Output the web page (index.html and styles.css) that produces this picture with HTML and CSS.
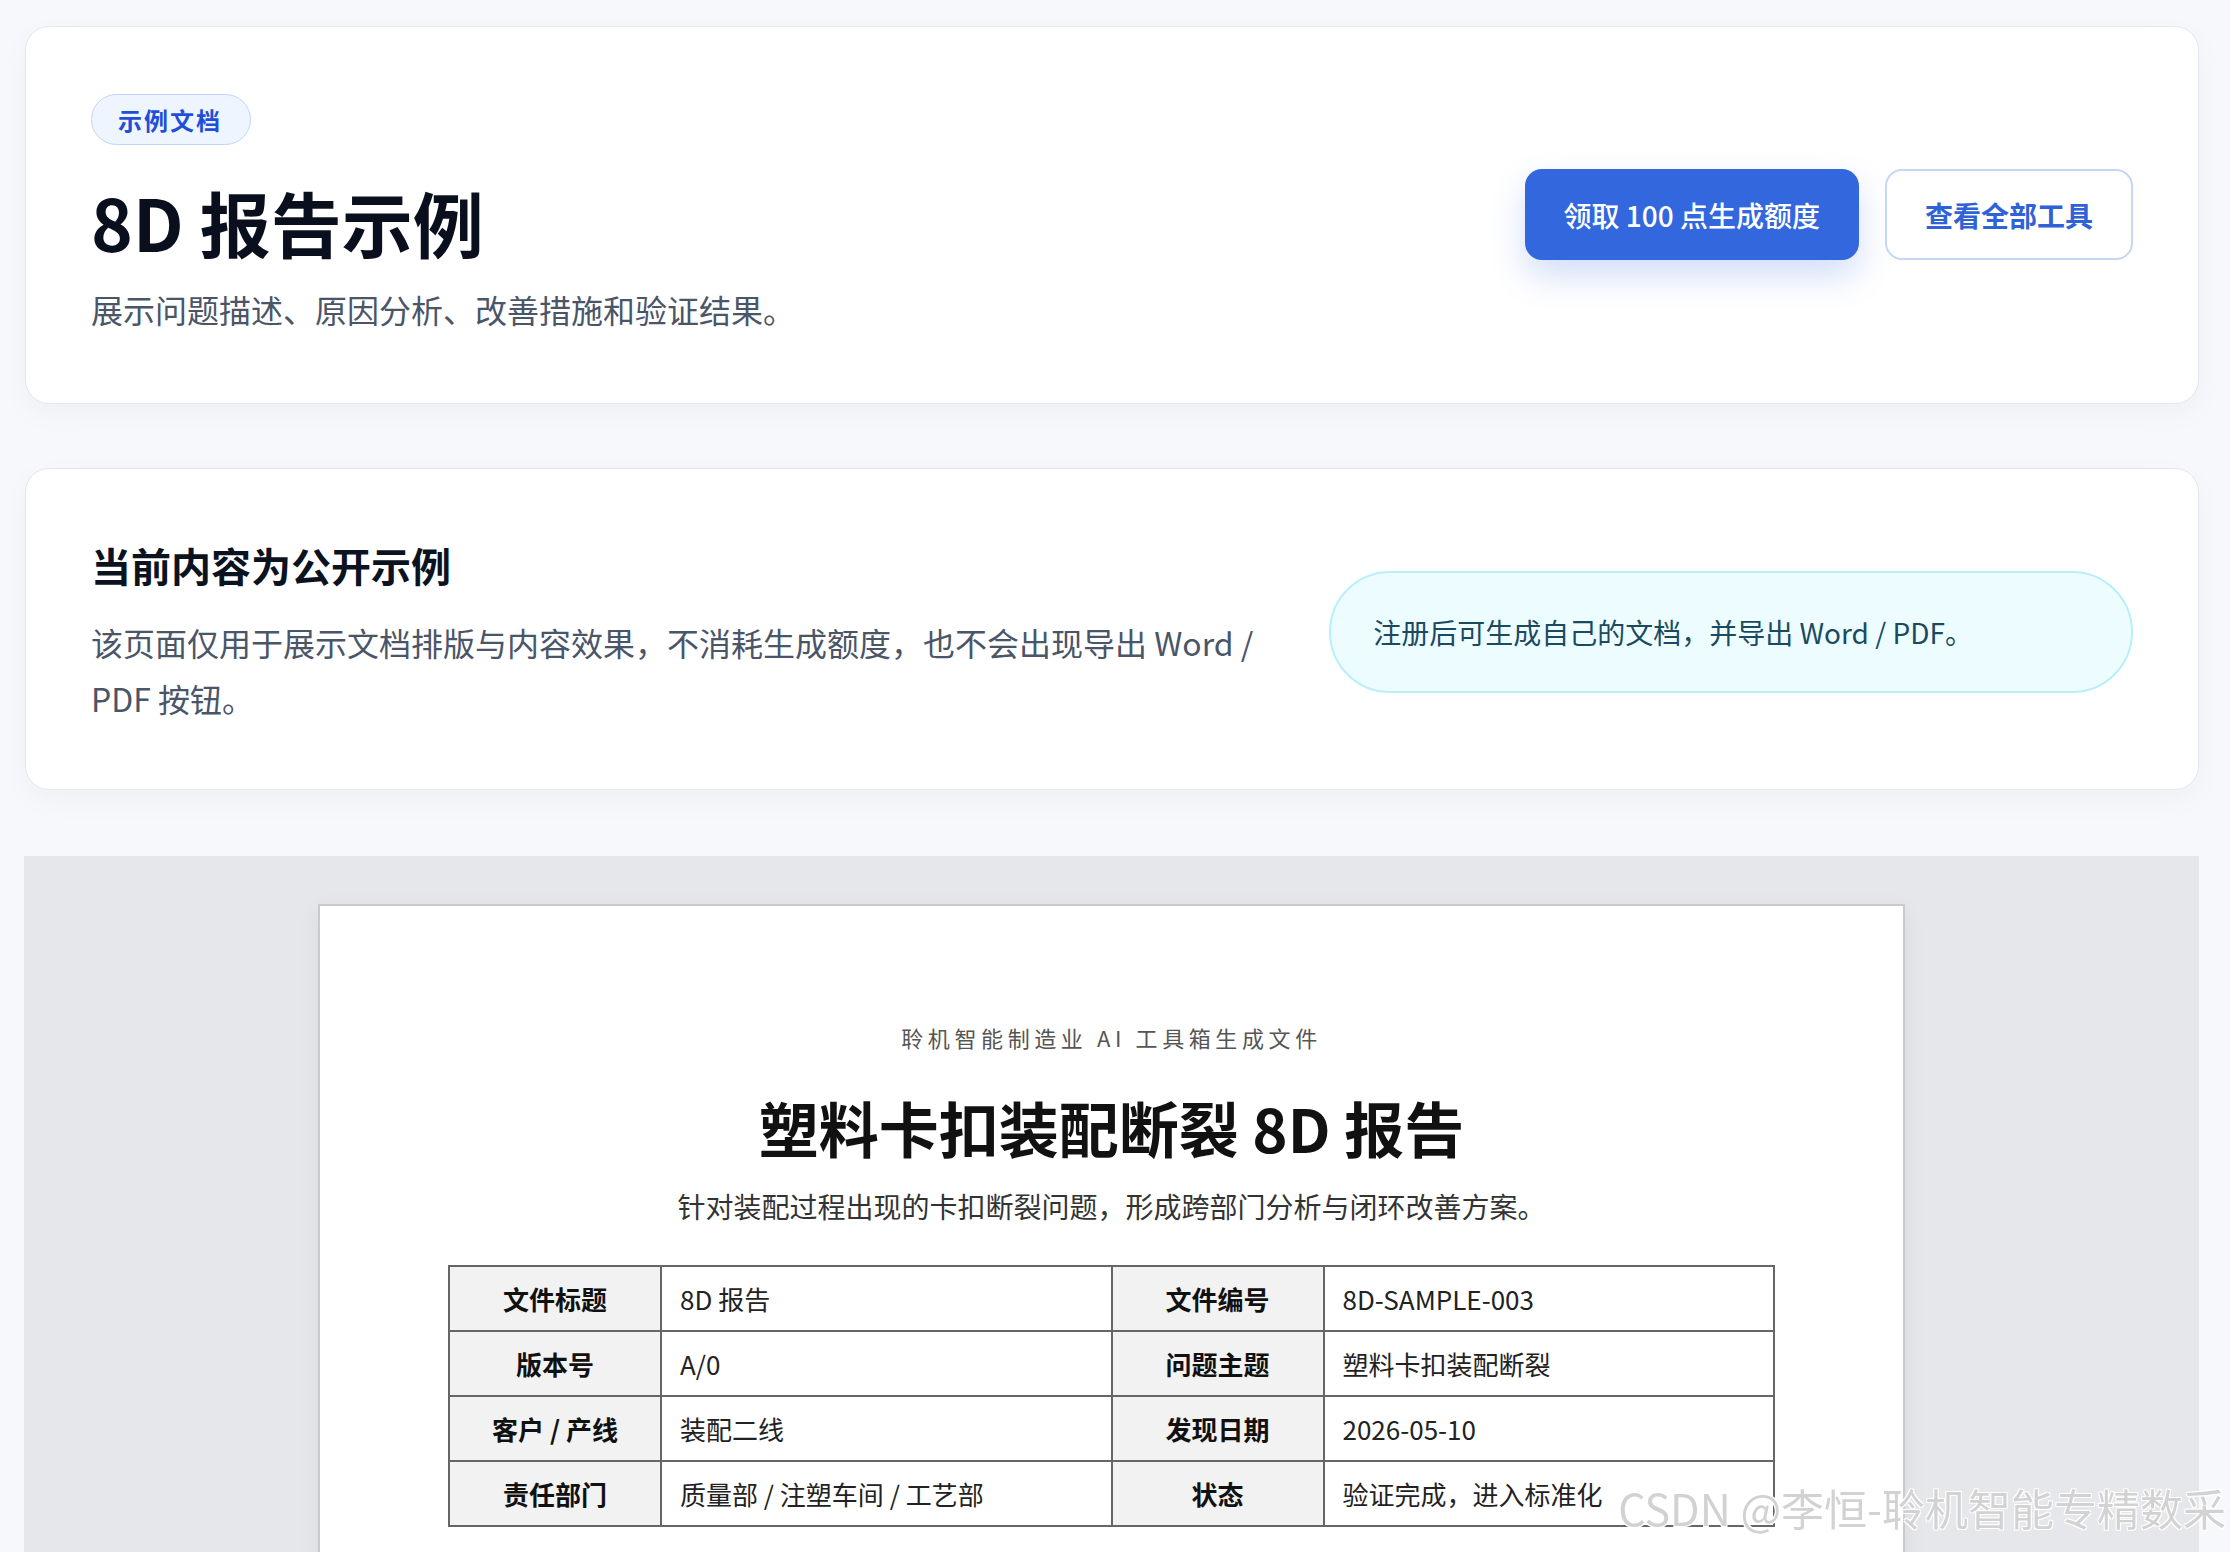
FILE: index.html
```html
<!DOCTYPE html>
<html lang="zh-CN">
<head>
  <meta charset="UTF-8">
  <meta name="viewport" content="width=device-width, initial-scale=1.0">
  <title>8D 报告示例</title>
  <link rel="stylesheet" href="styles.css">
</head>
<body>
  <main class="page">
    <section class="card hero">
      <div class="hero-text">
        <span class="badge">示例文档</span>
        <h1>8D 报告示例</h1>
        <p class="hero-sub">展示问题描述、原因分析、改善措施和验证结果。</p>
      </div>
      <div class="hero-actions">
        <a class="btn btn-primary" href="#">领取 100 点生成额度</a>
        <a class="btn btn-ghost" href="#">查看全部工具</a>
      </div>
    </section>

    <section class="card notice">
      <div class="notice-text">
        <h2>当前内容为公开示例</h2>
        <p>该页面仅用于展示文档排版与内容效果，不消耗生成额度，也不会出现导出 Word / PDF 按钮。</p>
      </div>
      <div class="notice-pill">注册后可生成自己的文档，并导出 Word / PDF。</div>
    </section>

    <section class="doc-area">
      <article class="paper">
        <div class="paper-brand">聆机智能制造业 AI 工具箱生成文件</div>
        <h3 class="paper-title">塑料卡扣装配断裂 8D 报告</h3>
        <p class="paper-sub">针对装配过程出现的卡扣断裂问题，形成跨部门分析与闭环改善方案。</p>

        <table class="info-table">
          <tr>
            <th>文件标题</th>
            <td>8D 报告</td>
            <th>文件编号</th>
            <td>8D-SAMPLE-003</td>
          </tr>
          <tr>
            <th>版本号</th>
            <td>A/0</td>
            <th>问题主题</th>
            <td>塑料卡扣装配断裂</td>
          </tr>
          <tr>
            <th>客户 / 产线</th>
            <td>装配二线</td>
            <th>发现日期</th>
            <td>2026-05-10</td>
          </tr>
          <tr>
            <th>责任部门</th>
            <td>质量部 / 注塑车间 / 工艺部</td>
            <th>状态</th>
            <td>验证完成，进入标准化</td>
          </tr>
        </table>
      </article>
    </section>
  </main>

  <div class="watermark">CSDN @李恒-聆机智能专精数采</div>
</body>
</html>
```

FILE: styles.css
```css
html, body {
    margin: 0;
    padding: 0;
}

body {
    background: #f6f8fc;
    font-family: "Noto Sans CJK SC", "Noto Sans", sans-serif;
    color: #0f172a;
    overflow: hidden;
}

.page {
    padding: 26px 31px 0 24px;
}

.card {
    background: #fff;
    border: 1px solid #e2e7f0;
    border-radius: 24px;
    box-shadow: 0 10px 30px rgba(15, 23, 42, 0.035);
    margin-left: 1px;
}

/* hero */
.hero {
    display: flex;
    align-items: center;
    justify-content: space-between;
    padding: 67px 65px 68px;
}

.badge {
    display: inline-flex;
    align-items: center;
    height: 49px;
    padding: 0 28px 0 26px;
    border: 1px solid #bfd6fb;
    border-radius: 999px;
    background: #eef5ff;
    color: #1f4fd8;
    font-size: 24px;
    font-weight: 600;
    letter-spacing: 2px;
}

.hero h1 {
    margin: 34px 0 0;
    font-size: 71px;
    line-height: 1.2;
    font-weight: 700;
    color: #0a0f1e;
}

.hero-sub {
    margin: 20px 0 0;
    font-size: 32px;
    line-height: 1.6;
    color: #4a5568;
}

.hero-actions {
    display: flex;
    gap: 26px;
}

.btn {
    display: inline-flex;
    align-items: center;
    justify-content: center;
    height: 91px;
    padding: 0 39px;
    border-radius: 17px;
    font-size: 28px;
    font-weight: 500;
    text-decoration: none;
    box-sizing: border-box;
}

.btn-primary {
    background: #3267dd;
    color: #fff;
    box-shadow: 0 16px 34px rgba(50, 103, 221, 0.22);
}

.btn-ghost {
    background: #fff;
    color: #2f62d6;
    border: 2px solid #c6d7f5;
    padding: 0 38px;
    font-weight: 600;
}

/* notice */
.notice {
    display: grid;
    grid-template-columns: 1.5fr 1fr;
    gap: 40px;
    align-items: center;
    margin-top: 64px;
    padding: 69px 65px 63px;
}

.notice h2 {
    margin: 0 0 22px;
    font-size: 40px;
    line-height: 1.35;
    font-weight: 700;
    color: #0b1220;
}

.notice p {
    margin: 0;
    font-size: 32px;
    line-height: 56px;
    color: #4a5568;
}

.notice-pill {
    display: flex;
    align-items: center;
    height: 122px;
    box-sizing: border-box;
    padding: 0 42px;
    margin-left: -3px;
    border: 2px solid #b8eff9;
    border-radius: 999px;
    background: #edfdff;
    color: #1b4a5f;
    font-size: 28px;
}

/* document preview */
.doc-area {
    margin-top: 66px;
    background: #e6e7eb;
    padding: 48px 0 60px;
}

.paper {
    width: 1587px;
    margin: 0 auto;
    box-sizing: border-box;
    background: #fff;
    border: 2px solid #cacaca;
    box-shadow: 0 6px 22px rgba(0, 0, 0, 0.06);
    padding: 115px 128px 120px;
    text-align: center;
}

.paper-brand {
    font-size: 22px;
    line-height: 33px;
    letter-spacing: 4.6px;
    color: #555;
}

.paper-title {
    margin: 34px 0 0;
    font-size: 60px;
    line-height: 78px;
    font-weight: 700;
    color: #111;
}

.paper-sub {
    margin: 18px 0 0;
    font-size: 28px;
    line-height: 44px;
    color: #333;
}

.info-table {
    width: 100%;
    margin-top: 37px;
    border-collapse: collapse;
    border: 2px solid #666;
    font-size: 26px;
    color: #222;
}

.info-table th,
.info-table td {
    border: 2px solid #666;
    padding: 12px 18px;
    line-height: 39px;
    height: 39px;
}

.info-table th {
    width: 16%;
    background: #f2f2f2;
    font-weight: 700;
    text-align: center;
    color: #111;
}

.info-table td {
    width: 34%;
    text-align: left;
}

.watermark {
    position: fixed;
    right: 4px;
    bottom: 14px;
    font-size: 43px;
    color: rgba(205, 205, 205, 0.9);
    text-shadow: 1px 1px 0 #fff, -1px -1px 0 #fff, 1px -1px 0 #fff, -1px 1px 0 #fff;
    pointer-events: none;
}
```
